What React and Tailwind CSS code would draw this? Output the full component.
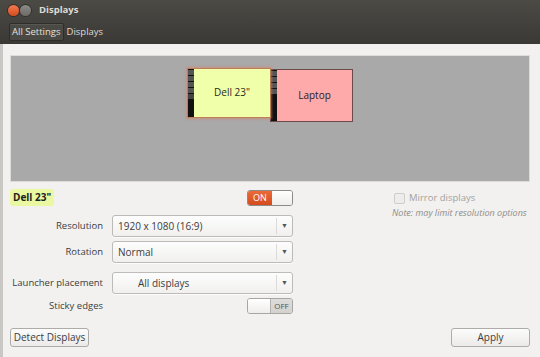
import React from "react";

const font = { fontFamily: '"Open Sans", "Liberation Sans", sans-serif' };

function Dropdown({ children, center }) {
  return (
    <div className="flex h-[22px] w-[181px] items-stretch rounded-[3px] border border-[#bdbbb7] bg-gradient-to-b from-[#fdfdfd] to-[#f1f0ef] shadow-[0_1px_0_rgba(255,255,255,0.8)]">
      <div className={"flex flex-1 items-center text-[10px] text-[#3c3c3c] " + (center ? "pl-[25px]" : "pl-[5px]")}>{children}</div>
      <div className="my-[2px] w-px bg-[#dcdad7]" />
      <div className="flex w-[15px] items-center justify-center text-[7px] text-[#555]">▼</div>
    </div>
  );
}

function Label({ children }) {
  return <div className="w-[94px] whitespace-nowrap pr-[1px] text-right text-[9.5px] text-[#3c3c3c]">{children}</div>;
}

function Button({ children, className = "" }) {
  return (
    <div className={"flex h-[19px] items-center justify-center rounded-[3px] border border-[#aeaca8] bg-gradient-to-b from-[#fcfcfc] to-[#ebeae8] text-[10px] text-[#3c3c3c] " + className}>
      {children}
    </div>
  );
}

export default function App() {
  return (
    <div style={font} className="flex h-[357px] w-[540px] flex-col overflow-hidden bg-[#3c3b37]">
      {/* Title bar */}
      <div className="h-[44px] bg-gradient-to-b from-[#4b4a45] to-[#3a3935]">
        <div className="flex h-[20px] items-center pl-[8px]">
          <div className="h-[11px] w-[11px] rounded-full bg-gradient-to-b from-[#f27a4f] to-[#d44b1c] shadow-[0_0_0_1px_#3a2a22]" />
          <div className="ml-[1px] h-[11px] w-[11px] rounded-full bg-gradient-to-b from-[#8b8a86] to-[#6c6b67] shadow-[0_0_0_1px_#32312d]" />
          <div className="ml-[8px] text-[9.5px] font-bold text-[#dfdbd2]">Displays</div>
        </div>
        <div className="flex h-[24px] items-start pl-[9px] pt-[3px]">
          <div className="flex h-[18px] items-center rounded-[2px] border border-[#2e2d2a] bg-[#4a4944] px-[2px] text-[9.5px] text-[#e6e2da] shadow-[inset_0_1px_0_rgba(255,255,255,0.08)]">
            All Settings
          </div>
          <div className="ml-[3px] flex h-[18px] items-center text-[9.5px] text-[#dfdbd2]">Displays</div>
        </div>
      </div>

      {/* Content */}
      <div className="flex flex-1 flex-col border-l-[3px] border-[#c9c7c4] bg-[#f2f1f0] pl-[7px] pr-[10px]">
        {/* Canvas panel */}
        <div className="mt-[11px] h-[127px] w-[520px] shrink-0 border border-[#dedcd9] bg-[#a9a9a9] p-0">
          <div className="relative h-full w-full">
            {/* Laptop */}
            <div className="absolute left-[259px] top-[13px] flex h-[53px] w-[83px] border border-[#6a4a4a] bg-[#ffaaaa]">
              <div className="flex w-[6px] flex-col justify-start gap-[1px] bg-[#111] pt-[1px]">
                <div className="h-[5px] bg-[#555]" />
                <div className="h-[5px] bg-[#555]" />
                <div className="h-[5px] bg-[#555]" />
                <div className="h-[5px] bg-[#555]" />
              </div>
              <div className="flex flex-1 items-center justify-center text-[10px] text-[#2b2020]">Laptop</div>
            </div>
            {/* Dell */}
            <div className="absolute left-[176px] top-[12px] flex h-[50px] w-[84px] border border-[#b9805a] bg-[#efffaa] shadow-[0_0_2px_1px_rgba(230,120,90,0.55)]">
              <div className="flex w-[6px] flex-col gap-[1px] bg-[#111] pt-[1px]">
                <div className="h-[5px] bg-[#555]" />
                <div className="h-[5px] bg-[#555]" />
                <div className="h-[5px] bg-[#555]" />
                <div className="h-[5px] bg-[#555]" />
                <div className="h-[5px] bg-[#444]" />
              </div>
              <div className="flex flex-1 items-center justify-center pb-[2px] text-[10px] text-[#2b2b20]">Dell 23"</div>
            </div>
          </div>
        </div>

        <div className="flex">
          {/* Left column */}
          <div className="flex w-[283px] flex-col">
            <div className="mt-[7px] flex h-[17px] items-center justify-between">
              <div className="flex h-[17px] items-center rounded-[3px] bg-[#eaf8a2] px-[3px] text-[10px] font-bold text-[#222]">Dell 23"</div>
              <div className="flex h-[16px] w-[46px] overflow-hidden rounded-[3px] border border-[#8e8b86]">
                <div className="flex w-[24px] items-center justify-center bg-gradient-to-b from-[#ec6a3a] to-[#d44b1c] text-[9px] text-white">ON</div>
                <div className="flex-1 bg-gradient-to-b from-[#ffffff] to-[#eeedeb]" />
              </div>
            </div>
            <div className="mt-[9px] flex items-center gap-[8px]">
              <Label>Resolution</Label>
              <Dropdown>1920 x 1080 (16:9)</Dropdown>
            </div>
            <div className="mt-[4px] flex items-center gap-[8px]">
              <Label>Rotation</Label>
              <Dropdown>Normal</Dropdown>
            </div>
            <div className="mt-[9px] flex items-center gap-[8px]">
              <Label>Launcher placement</Label>
              <Dropdown center>All displays</Dropdown>
            </div>
            <div className="mt-[4px] flex items-center gap-[8px]">
              <Label>Sticky edges</Label>
              <div className="ml-auto flex h-[16px] w-[46px] overflow-hidden rounded-[3px] border border-[#a8a6a2]">
                <div className="w-[23px] border-r border-[#b5b3af] bg-gradient-to-b from-[#ffffff] to-[#eeedeb]" />
                <div className="flex flex-1 items-center justify-center bg-gradient-to-b from-[#dddcda] to-[#d3d2cf] text-[8px] text-[#555]">OFF</div>
              </div>
            </div>
          </div>

          {/* Right column */}
          <div className="ml-[99px] mt-[9px] flex flex-col">
            <div className="flex items-center gap-[4px] pl-[2px]">
              <div className="h-[11px] w-[11px] rounded-[2px] border border-[#cfcdca] bg-[#eeedeb]" />
              <div className="text-[9.5px] text-[#a3a19d]">Mirror displays</div>
            </div>
            <div className="mt-[1px] whitespace-nowrap text-[9px] italic text-[#8e8c88]">Note: may limit resolution options</div>
          </div>
        </div>

        <div className="mt-[14px] flex justify-between">
          <Button className="w-[79px]">Detect Displays</Button>
          <Button className="w-[79px]">Apply</Button>
        </div>
      </div>
    </div>
  );
}
